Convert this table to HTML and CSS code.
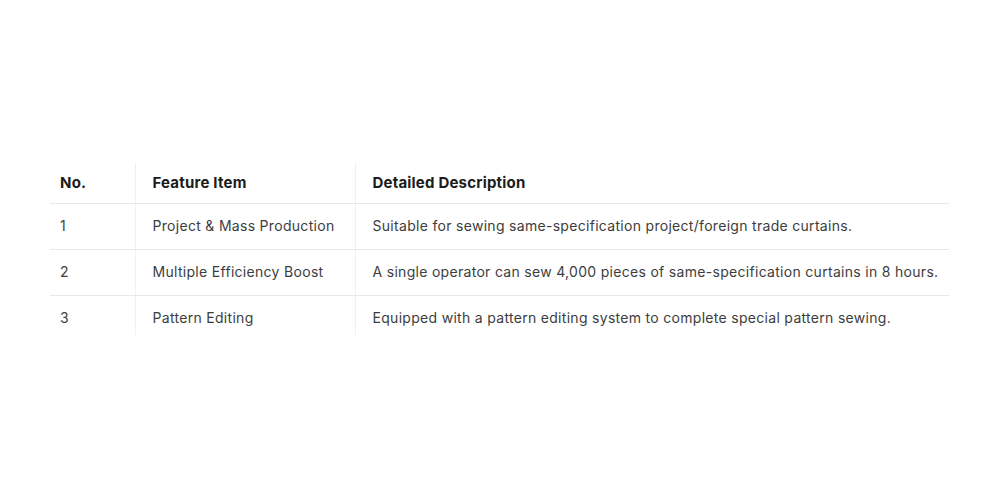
FILE: index.html
```html
<!DOCTYPE html>
<html lang="en">
<head>
    <meta charset="UTF-8">
    <meta name="viewport" content="width=device-width, initial-scale=1.0">
    <title>Features</title>
    <link rel="stylesheet" href="styles.css">
</head>
<body>
    <div class="page">
        <table class="feature-table">
            <thead>
                <tr>
                    <th class="col-no">No.</th>
                    <th class="col-item">Feature Item</th>
                    <th class="col-desc">Detailed Description</th>
                </tr>
            </thead>
            <tbody>
                <tr>
                    <td class="col-no">1</td>
                    <td class="col-item">Project &amp; Mass Production</td>
                    <td class="col-desc">Suitable for sewing same-specification project/foreign trade curtains.</td>
                </tr>
                <tr>
                    <td class="col-no">2</td>
                    <td class="col-item">Multiple Efficiency Boost</td>
                    <td class="col-desc">A single operator can sew 4,000 pieces of same-specification curtains in 8 hours.</td>
                </tr>
                <tr>
                    <td class="col-no">3</td>
                    <td class="col-item">Pattern Editing</td>
                    <td class="col-desc">Equipped with a pattern editing system to complete special pattern sewing.</td>
                </tr>
            </tbody>
        </table>
    </div>
</body>
</html>
```

FILE: styles.css
```css
html, body {
    margin: 0;
    padding: 0;
    background: #fff;
}

body {
    font-family: Inter, "Noto Sans", sans-serif;
    font-size: 14px;
    color: #3d3d3d;
}

.page {
    width: 1000px;
    height: 500px;
    display: flex;
    flex-direction: column;
    padding: 163px 51px 0 50px;
    box-sizing: border-box;
}

.feature-table {
    width: 899px;
    border-collapse: collapse;
    table-layout: fixed;
}

.feature-table th,
.feature-table td {
    box-sizing: border-box;
    text-align: left;
    line-height: 20px;
    padding: 12px 0 13px 17px;
    border-bottom: 1px solid #e8e8e8;
    white-space: nowrap;
    letter-spacing: 0.3px;
}

.feature-table th {
    font-size: 15px;
    font-weight: 700;
    color: #1c1c1c;
    letter-spacing: 0.2px;
    padding-top: 10px;
    padding-bottom: 10px;
}

.feature-table tbody tr:last-child td {
    border-bottom: none;
    padding-bottom: 7px;
}

.col-no {
    width: 85px;
}

.feature-table .col-no {
    padding-left: 10px;
}

.col-item {
    width: 220px;
    border-left: 1px solid #f0f0f0;
}

.col-desc {
    border-left: 1px solid #f0f0f0;
}
```
